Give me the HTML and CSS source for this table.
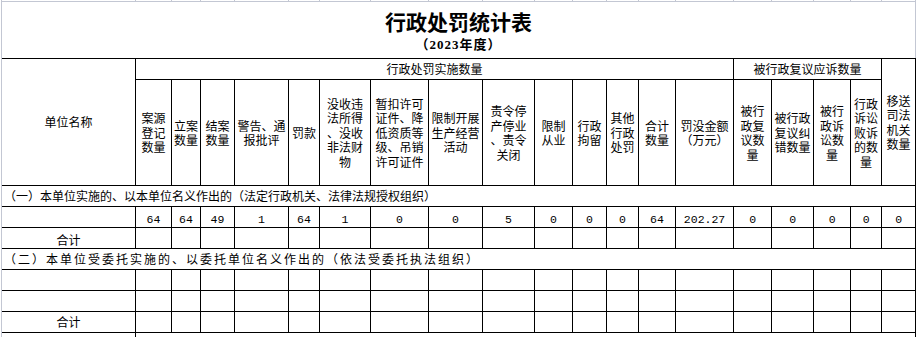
FILE: index.html
```html
<!DOCTYPE html>
<html lang="zh-CN">
<head>
<meta charset="utf-8">
<title>行政处罚统计表</title>
<link rel="stylesheet" href="styles.css">
</head>
<body>
<div class="sheet">
  <div class="gridtop">
    <span></span><span></span><span></span><span></span><span></span><span></span><span></span><span></span><span></span><span></span>
    <span></span><span></span><span></span><span></span><span></span><span></span><span></span><span></span><span></span><span></span>
  </div>
  <div class="title-area">
    <div class="title">行政处罚统计表</div>
    <div class="subtitle">（2023年度）</div>
  </div>
  <table class="stats">
    <colgroup>
      <col class="w0"><col class="w1"><col class="w2"><col class="w3"><col class="w4">
      <col class="w5"><col class="w6"><col class="w7"><col class="w8"><col class="w9">
      <col class="w10"><col class="w11"><col class="w12"><col class="w13"><col class="w14">
      <col class="w15"><col class="w16"><col class="w17"><col class="w18"><col class="w19">
    </colgroup>
    <tbody>
      <tr class="hrow1">
        <td rowspan="2" class="hcell">单位名称</td>
        <td colspan="14" class="hcell">行政处罚实施数量</td>
        <td colspan="4" class="hcell">被行政复议应诉数量</td>
        <td rowspan="2" class="hcell">移送<br>司法<br>机关<br>数量</td>
      </tr>
      <tr class="hrow2">
        <td class="hcell">案源<br>登记<br>数量</td>
        <td class="hcell">立案<br>数量</td>
        <td class="hcell">结案<br>数量</td>
        <td class="hcell">警告、通<br>报批评</td>
        <td class="hcell">罚款</td>
        <td class="hcell">没收违<br>法所得<br>、没收<br>非法财<br>物</td>
        <td class="hcell">暂扣许可<br>证件、降<br>低资质等<br>级、吊销<br>许可证件</td>
        <td class="hcell">限制开展<br>生产经营<br>活动</td>
        <td class="hcell">责令停<br>产停业<br>、责令<br>关闭</td>
        <td class="hcell">限制<br>从业</td>
        <td class="hcell">行政<br>拘留</td>
        <td class="hcell">其他<br>行政<br>处罚</td>
        <td class="hcell">合计<br>数量</td>
        <td class="hcell">罚没金额<br>（万元）</td>
        <td class="hcell">被行<br>政复<br>议数<br>量</td>
        <td class="hcell">被行政<br>复议纠<br>错数量</td>
        <td class="hcell">被行<br>政诉<br>讼数<br>量</td>
        <td class="hcell">行政<br>诉讼<br>败诉<br>的数<br>量</td>
      </tr>
      <tr class="row">
        <td colspan="20" class="section">（一）本单位实施的、以本单位名义作出的（法定行政机关、法律法规授权组织）</td>
      </tr>
      <tr class="row num">
        <td></td>
        <td>64</td><td>64</td><td>49</td><td>1</td><td>64</td><td>1</td><td>0</td><td>0</td><td>5</td><td>0</td>
        <td>0</td><td>0</td><td>64</td><td>202.27</td><td>0</td><td>0</td><td>0</td><td>0</td><td>0</td>
      </tr>
      <tr class="row">
        <td class="total total-first">合计</td>
        <td></td><td></td><td></td><td></td><td></td><td></td><td></td><td></td><td></td><td></td>
        <td></td><td></td><td></td><td></td><td></td><td></td><td></td><td></td><td></td>
      </tr>
      <tr class="row">
        <td colspan="20" class="section section-wide">（二）本单位受委托实施的、以委托单位名义作出的（依法受委托执法组织）</td>
      </tr>
      <tr class="row">
        <td></td>
        <td></td><td></td><td></td><td></td><td></td><td></td><td></td><td></td><td></td><td></td>
        <td></td><td></td><td></td><td></td><td></td><td></td><td></td><td></td><td></td>
      </tr>
      <tr class="row">
        <td></td>
        <td></td><td></td><td></td><td></td><td></td><td></td><td></td><td></td><td></td><td></td>
        <td></td><td></td><td></td><td></td><td></td><td></td><td></td><td></td><td></td>
      </tr>
      <tr class="row">
        <td class="total">合计</td>
        <td></td><td></td><td></td><td></td><td></td><td></td><td></td><td></td><td></td><td></td>
        <td></td><td></td><td></td><td></td><td></td><td></td><td></td><td></td><td></td>
      </tr>
      <tr class="row">
        <td></td>
        <td colspan="19"></td>
      </tr>
    </tbody>
  </table>
</div>
</body>
</html>
```

FILE: styles.css
```css
html, body {
  margin: 0;
  padding: 0;
  background: #ffffff;
  overflow: hidden;
}

body {
  font-family: "Liberation Sans", "Noto Sans CJK SC", sans-serif;
  font-size: 12px;
  color: #000000;
}

.sheet {
  margin-left: 1px;
  border-left: 1px solid #c3c7d3;
  width: 914px;
}

.gridtop {
  display: grid;
  grid-template-columns: 134px 36px 29px 34px 54px 31px 51px 58px 54px 52px 38px 34px 32px 37px 58px 38px 42px 37px 31px 34px;
  height: 1px;
}

.gridtop span {
  border-right: 1px solid #c3c7d3;
  box-sizing: border-box;
  height: 1px;
}

.title-area {
  border-top: 1px solid #c3c7d3;
  border-right: 1px solid #c3c7d3;
  height: 57px;
  width: 914px;
  padding-top: 8px;
  box-sizing: border-box;
  text-align: center;
}

.title {
  font-family: "Liberation Sans", "Noto Sans CJK SC", sans-serif;
  font-size: 21px;
  line-height: 26px;
  font-weight: 700;
}

.subtitle {
  font-family: "Liberation Serif", "Noto Sans CJK SC", serif;
  font-size: 13px;
  line-height: 16px;
  font-weight: 700;
  letter-spacing: 1px;
  margin-top: 1px;
}

.stats {
  border-collapse: separate;
  border-spacing: 0;
  table-layout: fixed;
  width: 914px;
  border-top: 1px solid #000000;
}

.stats td {
  box-sizing: border-box;
  border-right: 1px solid #000000;
  border-bottom: 1px solid #000000;
  padding: 0;
  text-align: center;
  vertical-align: middle;
  line-height: 14px;
  white-space: nowrap;
  overflow: hidden;
}

.w0 { width: 134px; }
.w1 { width: 36px; }
.w2 { width: 29px; }
.w3 { width: 34px; }
.w4 { width: 54px; }
.w5 { width: 31px; }
.w6 { width: 51px; }
.w7 { width: 58px; }
.w8 { width: 54px; }
.w9 { width: 52px; }
.w10 { width: 38px; }
.w11 { width: 34px; }
.w12 { width: 32px; }
.w13 { width: 37px; }
.w14 { width: 58px; }
.w15 { width: 38px; }
.w16 { width: 42px; }
.w17 { width: 37px; }
.w18 { width: 31px; }
.w19 { width: 34px; }

.hrow1 { height: 21px; }
.hrow2 { height: 106px; }
.row { height: 21px; }

.stats .hcell {
  line-height: 14.5px;
  padding-top: 3px;
}

.stats .section {
  text-align: left;
  padding-left: 2px;
  padding-top: 2px;
}

.stats .section-wide {
  letter-spacing: 2px;
}

.stats .total {
  padding-top: 2px;
}

.stats .total-first {
  padding-top: 5px;
}

.num td {
  font-family: "Liberation Mono", monospace;
  font-size: 11.5px;
  vertical-align: bottom;
}
```
